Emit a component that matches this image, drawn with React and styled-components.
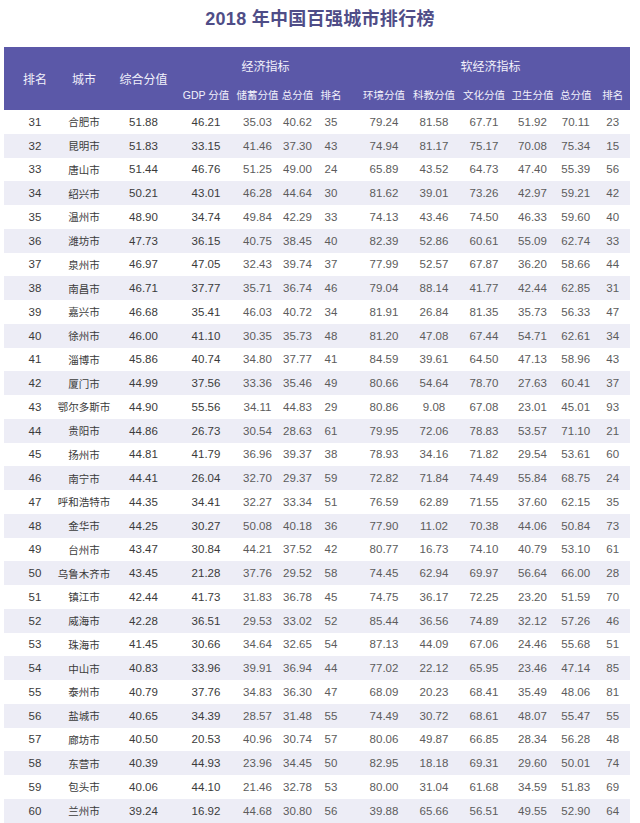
import React from 'react';
import styled, { createGlobalStyle } from 'styled-components';

const GlobalStyle = createGlobalStyle`
  html, body {
    margin: 0;
    padding: 0;
    background: #ffffff;
  }
  body {
    font-family: "Liberation Sans", "Noto Sans CJK SC", sans-serif;
  }
`;

// 13 data columns plus a narrow gap column between the two indicator groups
const COLUMNS = '45px 53px 66px 59px 44px 36px 31px 12.5px 50px 50px 50px 47px 39.5px 34.5px';

const Page = styled.div`
  width: 640px;
  height: 823px;
  overflow: hidden;
  background: #ffffff;
`;

const Title = styled.h1`
  margin: 0;
  height: 47px;
  padding-top: 9px;
  box-sizing: border-box;
  text-align: center;
  font-size: 18px;
  line-height: 20px;
  font-weight: 700;
  color: #4f4d87;
  letter-spacing: 0.3px;
`;

const Table = styled.div`
  margin-left: 4px;
  width: 626px;
`;

const Header = styled.div`
  display: grid;
  grid-template-columns: ${COLUMNS};
  grid-template-rows: 38px 25px;
  padding-left: 8.5px;
  background: #5b58a8;
  color: #f2f1fb;
`;

const MainLabel = styled.div`
  grid-row: 1 / 3;
  grid-column: ${(p) => p.$col};
  display: flex;
  align-items: center;
  justify-content: center;
  font-size: 12px;
  white-space: nowrap;
`;

const GroupLabel = styled.div`
  grid-row: 1;
  grid-column: ${(p) => p.$span};
  display: flex;
  align-items: flex-end;
  justify-content: center;
  padding-bottom: 11px;
  padding-left: ${(p) => p.$padLeft || 0}px;
  padding-right: ${(p) => p.$padRight || 0}px;
  font-size: 12px;
  white-space: nowrap;
`;

const SubLabel = styled.div`
  grid-row: 2;
  grid-column: ${(p) => p.$col};
  display: flex;
  align-items: flex-start;
  justify-content: center;
  padding-top: 2px;
  font-size: 10.5px;
  white-space: nowrap;
`;

const Row = styled.div`
  display: grid;
  grid-template-columns: ${COLUMNS};
  height: 23.75px;
  padding-left: 8.5px;
  background: ${(p) => (p.$shaded ? '#ededf6' : '#ffffff')};
`;

const Cell = styled.div`
  display: flex;
  align-items: center;
  justify-content: center;
  white-space: nowrap;
  font-size: ${(p) => (p.$city ? '10.5px' : '11.5px')};
  color: ${(p) => (p.$strong ? '#3b3b3b' : '#5c5c5c')};
`;

const Gap = styled.div``;

const subEco = ['GDP 分值', '储蓄分值', '总分值', '排名'];
const subSoft = ['环境分值', '科教分值', '文化分值', '卫生分值', '总分值', '排名'];

const rows = [
  '31 合肥市 51.88 46.21 35.03 40.62 35 79.24 81.58 67.71 51.92 70.11 23',
  '32 昆明市 51.83 33.15 41.46 37.30 43 74.94 81.17 75.17 70.08 75.34 15',
  '33 唐山市 51.44 46.76 51.25 49.00 24 65.89 43.52 64.73 47.40 55.39 56',
  '34 绍兴市 50.21 43.01 46.28 44.64 30 81.62 39.01 73.26 42.97 59.21 42',
  '35 温州市 48.90 34.74 49.84 42.29 33 74.13 43.46 74.50 46.33 59.60 40',
  '36 潍坊市 47.73 36.15 40.75 38.45 40 82.39 52.86 60.61 55.09 62.74 33',
  '37 泉州市 46.97 47.05 32.43 39.74 37 77.99 52.57 67.87 36.20 58.66 44',
  '38 南昌市 46.71 37.77 35.71 36.74 46 79.04 88.14 41.77 42.44 62.85 31',
  '39 嘉兴市 46.68 35.41 46.03 40.72 34 81.91 26.84 81.35 35.73 56.33 47',
  '40 徐州市 46.00 41.10 30.35 35.73 48 81.20 47.08 67.44 54.71 62.61 34',
  '41 淄博市 45.86 40.74 34.80 37.77 41 84.59 39.61 64.50 47.13 58.96 43',
  '42 厦门市 44.99 37.56 33.36 35.46 49 80.66 54.64 78.70 27.63 60.41 37',
  '43 鄂尔多斯市 44.90 55.56 34.11 44.83 29 80.86 9.08 67.08 23.01 45.01 93',
  '44 贵阳市 44.86 26.73 30.54 28.63 61 79.95 72.06 78.83 53.57 71.10 21',
  '45 扬州市 44.81 41.79 36.96 39.37 38 78.93 34.16 71.82 29.54 53.61 60',
  '46 南宁市 44.41 26.04 32.70 29.37 59 72.82 71.84 74.49 55.84 68.75 24',
  '47 呼和浩特市 44.35 34.41 32.27 33.34 51 76.59 62.89 71.55 37.60 62.15 35',
  '48 金华市 44.25 30.27 50.08 40.18 36 77.90 11.02 70.38 44.06 50.84 73',
  '49 台州市 43.47 30.84 44.21 37.52 42 80.77 16.73 74.10 40.79 53.10 61',
  '50 乌鲁木齐市 43.45 21.28 37.76 29.52 58 74.45 62.94 69.97 56.64 66.00 28',
  '51 镇江市 42.44 41.73 31.83 36.78 45 74.75 36.17 72.25 23.20 51.59 70',
  '52 威海市 42.28 36.51 29.53 33.02 52 85.44 36.56 74.89 32.12 57.26 46',
  '53 珠海市 41.45 30.66 34.64 32.65 54 87.13 44.09 67.06 24.46 55.68 51',
  '54 中山市 40.83 33.96 39.91 36.94 44 77.02 22.12 65.95 23.46 47.14 85',
  '55 泰州市 40.79 37.76 34.83 36.30 47 68.09 20.23 68.41 35.49 48.06 81',
  '56 盐城市 40.65 34.39 28.57 31.48 55 74.49 30.72 68.61 48.07 55.47 55',
  '57 廊坊市 40.50 20.53 40.96 30.74 57 80.06 49.87 66.85 28.34 56.28 48',
  '58 东营市 40.39 44.93 23.96 34.45 50 82.95 18.18 69.31 29.60 50.01 74',
  '59 包头市 40.06 44.10 21.46 32.78 53 80.00 31.04 61.68 34.59 51.83 69',
  '60 兰州市 39.24 16.92 44.68 30.80 56 39.88 65.66 56.51 49.55 52.90 64',
].map((line) => line.split(' '));

export default function App() {
  return (
    <Page>
      <GlobalStyle />
      <Title>2018 年中国百强城市排行榜</Title>
      <Table>
        <Header>
          <MainLabel $col={1}>排名</MainLabel>
          <MainLabel $col={2}>城市</MainLabel>
          <MainLabel $col={3}>综合分值</MainLabel>
          <GroupLabel $span="4 / 8" $padLeft={8}>经济指标</GroupLabel>
          <GroupLabel $span="9 / 15" $padRight={8}>软经济指标</GroupLabel>
          {subEco.map((label, i) => (
            <SubLabel key={'e' + i} $col={4 + i}>{label}</SubLabel>
          ))}
          {subSoft.map((label, i) => (
            <SubLabel key={'s' + i} $col={9 + i}>{label}</SubLabel>
          ))}
        </Header>
        {rows.map((cells, r) => (
          <Row key={cells[0]} $shaded={r % 2 === 1}>
            {cells.slice(0, 7).map((value, c) => (
              <Cell key={c} $city={c === 1} $strong={c < 4}>
                {value}
              </Cell>
            ))}
            <Gap />
            {cells.slice(7).map((value, c) => (
              <Cell key={'s' + c}>{value}</Cell>
            ))}
          </Row>
        ))}
      </Table>
    </Page>
  );
}
